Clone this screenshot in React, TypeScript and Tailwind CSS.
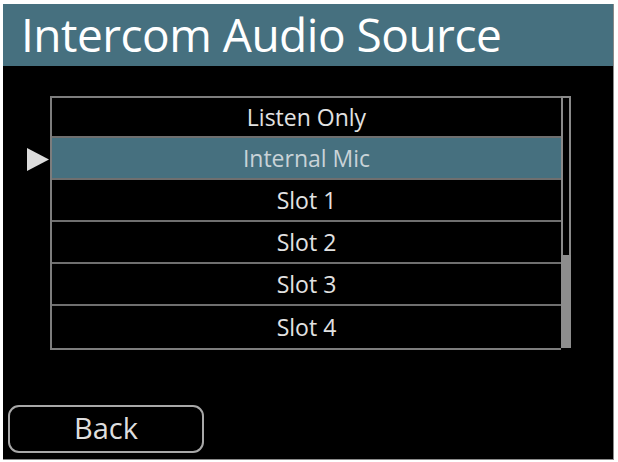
import React from "react";

const items = ["Listen Only", "Internal Mic", "Slot 1", "Slot 2", "Slot 3", "Slot 4"];
const selected = 1;

export default function App() {
	return (
		<div className="h-[462px] w-[618px] overflow-hidden bg-white pl-[3px] pt-[4px] font-['Open_Sans',sans-serif]">
			<div className="flex h-[456px] w-[611px] flex-col border-r border-b border-[#8a8a8a] bg-black">
				{/* title bar */}
				<div className="flex h-[62px] items-center bg-[#46707f] pl-[18px] pb-[2px]">
					<h1 className="text-[46px] leading-none tracking-[-0.5px] text-white">Intercom Audio Source</h1>
				</div>

				{/* option list with scrollbar */}
				<div className="mt-[30px] flex">
					<div className="flex w-[47px] flex-col">
						{items.map((item, i) => (
							<div key={item} className="flex h-[42px] items-center justify-end">
								{i === selected && (
									<svg width="22" height="23" viewBox="0 0 22 23" className="mr-px">
										<polygon points="0,0 22,11.5 0,23" fill="#dcdcdc" />
									</svg>
								)}
							</div>
						))}
					</div>
					<div className="flex w-[511px] flex-col border-l-2 border-t-2 border-b-2 border-[#7d7d7d]">
						{items.map((item, i) => (
							<div
								key={item}
								className={
									"flex items-center justify-center text-[23px] " +
									(i === selected ? "bg-[#46707f] text-[#c9d3d8]" : "text-[#e2e2e2]") +
									(i === 0 ? " h-[40px]" : " h-[42px]") +
									(i < items.length - 1 ? " border-b-2 border-[#6f6f6f]" : " h-[40px]")
								}
							>
								{item}
							</div>
						))}
					</div>
					<div className="flex w-[10px] flex-col">
						<div className="h-[159px] border-x-2 border-t-2 border-[#8a8a8a]" />
						<div className="h-[93px] bg-[#8d8d8d]" />
					</div>
				</div>

				{/* back button */}
				<div className="mt-auto mb-[6px] ml-[5px]">
					<button className="flex h-[48px] w-[196px] items-center justify-center rounded-[11px] border-2 border-[#a8a8a8] pb-[2px] text-[29px] text-[#dedede]">
						Back
					</button>
				</div>
			</div>
		</div>
	);
}
